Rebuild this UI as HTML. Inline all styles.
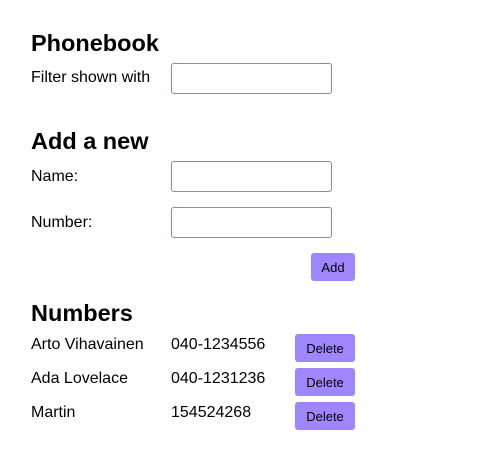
<!DOCTYPE html>
<html><head><style>
body{margin:0;width:496px;height:456px;background:#fff;font-family:"Liberation Sans",sans-serif;color:#000;position:relative}
h2{margin:0;font-size:23.5px;font-weight:bold;position:absolute;left:31px}
.t{position:absolute;font-size:16px;left:31px;white-space:nowrap}
.in{position:absolute;left:171px;width:159px;height:29px;border:1px solid #8c7ce6;border-radius:3px}
.b{position:absolute;background:#9f86ff;border-radius:3px;font-size:13px;text-align:center;line-height:30px;height:28px}
</style></head><body>
<h2 style="top:30px">Phonebook</h2>
<div class="t" style="top:69px">Filter shown with</div>
<div class="in" style="top:63px"></div>
<h2 style="top:128px">Add a new</h2>
<div class="t" style="top:168px">Name:</div>
<div class="in" style="top:161px"></div>
<div class="t" style="top:214px">Number:</div>
<div class="in" style="top:207px"></div>
<div class="b" style="left:311px;top:253px;width:44px">Add</div>
<h2 style="top:300px">Numbers</h2>
<div class="t" style="top:336px">Arto Vihavainen</div>
<div class="t" style="top:336px;left:171px">040-1234556</div>
<div class="b" style="left:295px;top:334px;width:60px">Delete</div>
<div class="t" style="top:370px">Ada Lovelace</div>
<div class="t" style="top:370px;left:171px">040-1231236</div>
<div class="b" style="left:295px;top:368px;width:60px">Delete</div>
<div class="t" style="top:404px">Martin</div>
<div class="t" style="top:404px;left:171px">154524268</div>
<div class="b" style="left:295px;top:402px;width:60px">Delete</div>
</body></html>
